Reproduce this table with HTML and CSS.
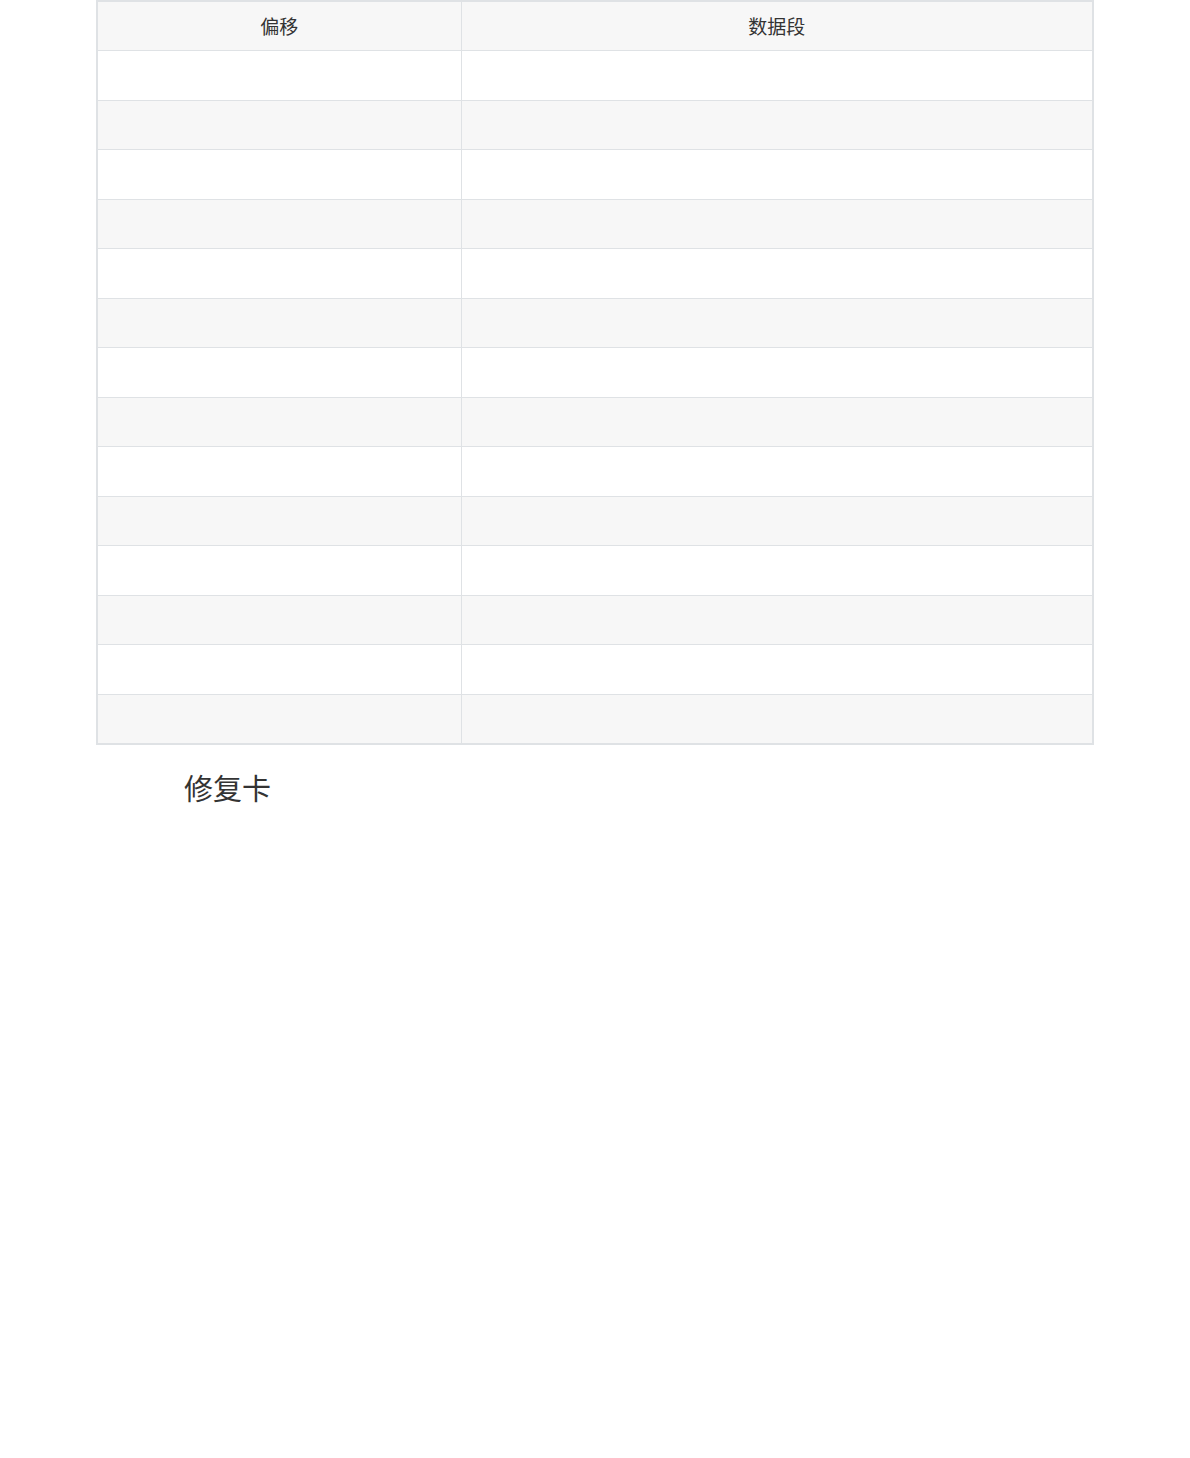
FILE: index.html
```html
<!DOCTYPE html>
<html lang="zh-CN">
<head>
    <meta charset="UTF-8">
    <title>修复卡</title>
    <link rel="stylesheet" href="styles.css">
</head>
<body>
    <div class="container">
        <table class="data-table">
            <thead>
                <tr>
                    <th class="col-offset">偏移</th>
                    <th>数据段</th>
                </tr>
            </thead>
            <tbody>
                <tr><td></td><td></td></tr>
                <tr><td></td><td></td></tr>
                <tr><td></td><td></td></tr>
                <tr><td></td><td></td></tr>
                <tr><td></td><td></td></tr>
                <tr><td></td><td></td></tr>
                <tr><td></td><td></td></tr>
                <tr><td></td><td></td></tr>
                <tr><td></td><td></td></tr>
                <tr><td></td><td></td></tr>
                <tr><td></td><td></td></tr>
                <tr><td></td><td></td></tr>
                <tr><td></td><td></td></tr>
                <tr><td></td><td></td></tr>
            </tbody>
        </table>

        <h2 class="section-title">修复卡</h2>
    </div>
</body>
</html>
```

FILE: styles.css
```css
* {
    margin: 0;
    padding: 0;
    box-sizing: border-box;
}

body {
    font-family: "Noto Sans CJK SC", "Noto Sans", sans-serif;
    color: #333;
    background: #fff;
    min-height: 100vh;
}

.container {
    width: 998px;
    margin: 0 auto;
}

.data-table {
    width: 100%;
    border-collapse: collapse;
    border: 2px solid #dfe2e5;
    table-layout: fixed;
}

.data-table th,
.data-table td {
    border: 1px solid #dfe2e5;
    height: 49.5px;
    font-size: 19px;
    font-weight: normal;
    text-align: center;
    color: #333;
}

.data-table th {
    height: 49.5px;
    padding-bottom: 1px;
    background: #f7f7f7;
}

.col-offset {
    width: 364px;
}

.data-table tbody tr:nth-child(even) {
    background: #f7f7f7;
}

.section-title {
    font-size: 29px;
    font-weight: normal;
    color: #333;
    padding-left: 88px;
    margin-top: 21px;
    line-height: 42px;
}
```
